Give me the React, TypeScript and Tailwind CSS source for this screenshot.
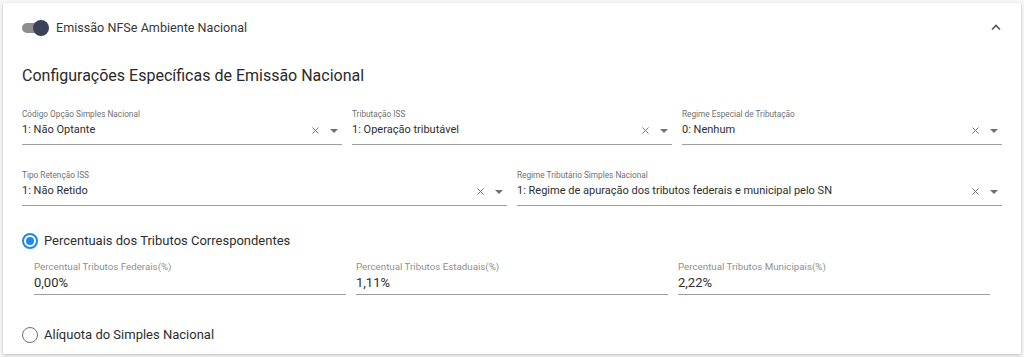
import React from "react";

const font = { fontFamily: "Roboto, 'Noto Sans', Arial, sans-serif" };

function Clear() {
  return (
    <svg width="7" height="7" viewBox="0 0 7 7" className="shrink-0">
      <path d="M0.5 0.5 L6.5 6.5 M6.5 0.5 L0.5 6.5" stroke="#777" strokeWidth="1" />
    </svg>
  );
}

function Arrow() {
  return (
    <svg width="8" height="4" viewBox="0 0 8 4" className="shrink-0">
      <path d="M0 0 L8 0 L4 4 Z" fill="#707070" />
    </svg>
  );
}

function SelectField({ label, value }: { label: string; value: string }) {
  return (
    <div className="flex flex-col border-b border-[#9e9e9e]">
      <div className="h-[11px] text-[8.25px] leading-[11px] text-[#707070] whitespace-nowrap">{label}</div>
      <div className="flex items-center h-[24px] pb-[3px]">
        <div className="flex-1 text-[11px] text-[#2e2e2e] whitespace-nowrap">{value}</div>
        <div className="flex items-center gap-[11px] pr-[4px]">
          <Clear />
          <Arrow />
        </div>
      </div>
    </div>
  );
}

function PercentField({ label, value }: { label: string; value: string }) {
  return (
    <div className="flex flex-col border-b border-[#9e9e9e]">
      <div className="h-[12px] text-[9.75px] leading-[12px] text-[#8f8f8f] whitespace-nowrap">{label}</div>
      <div className="h-[21px] flex items-center pb-[1px] text-[13px] text-[#2e2e2e]">{value}</div>
    </div>
  );
}

export default function App() {
  return (
    <div className="w-[1024px] h-[357px] bg-[#f7f7f7] overflow-hidden pt-[3px] px-[3px]" style={font}>
      <div className="bg-white shadow-[0_1px_3px_rgba(0,0,0,0.25)] px-[19px] pt-[13px] pb-[2px]">
        <div className="flex items-center h-6">
          <div className="relative w-[28px] h-[16px] flex items-center">
            <div className="w-[26px] h-[10px] rounded-full bg-[#8e8e8e]"></div>
            <div className="absolute left-[11px] top-0 w-[16px] h-[16px] rounded-full bg-[#3a4158]"></div>
          </div>
          <span className="ml-[6px] text-[12.6px] text-[#383838]">Emissão NFSe Ambiente Nacional</span>
          <div className="flex-1"></div>
          <svg width="10" height="7" viewBox="0 0 10 7" className="mr-[1px] mb-[1px]">
            <path d="M1 5.5 L5 1.5 L9 5.5" stroke="#555" strokeWidth="1.6" fill="none" />
          </svg>
        </div>

        <div className="mt-[22px] text-[16px] leading-[28px] text-[#2a2a2a]">
          Configurações Específicas de Emissão Nacional
        </div>

        <div className="mt-[19px] grid grid-cols-3 gap-[10px]">
          <SelectField label="Código Opção Simples Nacional" value="1: Não Optante" />
          <SelectField label="Tributação ISS" value="1: Operação tributável" />
          <SelectField label="Regime Especial de Tributação" value="0: Nenhum" />
        </div>

        <div className="mt-[25px] grid grid-cols-2 gap-[10px]">
          <SelectField label="Tipo Retenção ISS" value="1: Não Retido" />
          <SelectField
            label="Regime Tributário Simples Nacional"
            value="1: Regime de apuração dos tributos federais e municipal pelo SN"
          />
        </div>

        <div className="mt-[23px] flex items-center h-6">
          <div className="w-[16px] h-[16px] rounded-full border-2 border-[#1e88e5] flex items-center justify-center">
            <div className="w-[8px] h-[8px] rounded-full bg-[#1e88e5]"></div>
          </div>
          <span className="ml-[6px] text-[13px] text-[#2e2e2e]">Percentuais dos Tributos Correspondentes</span>
        </div>

        <div className="mt-[8px] px-[12px] grid grid-cols-3 gap-[10px]">
          <PercentField label="Percentual Tributos Federais(%)" value="0,00%" />
          <PercentField label="Percentual Tributos Estaduais(%)" value="1,11%" />
          <PercentField label="Percentual Tributos Municipais(%)" value="2,22%" />
        </div>

        <div className="mt-[28px] flex items-center h-6">
          <div className="w-[16px] h-[16px] rounded-full border-[1.5px] border-[#6f6f6f]"></div>
          <span className="ml-[6px] text-[13px] text-[#2e2e2e]">Alíquota do Simples Nacional</span>
        </div>
        <div className="h-[5px]"></div>
      </div>
    </div>
  );
}
